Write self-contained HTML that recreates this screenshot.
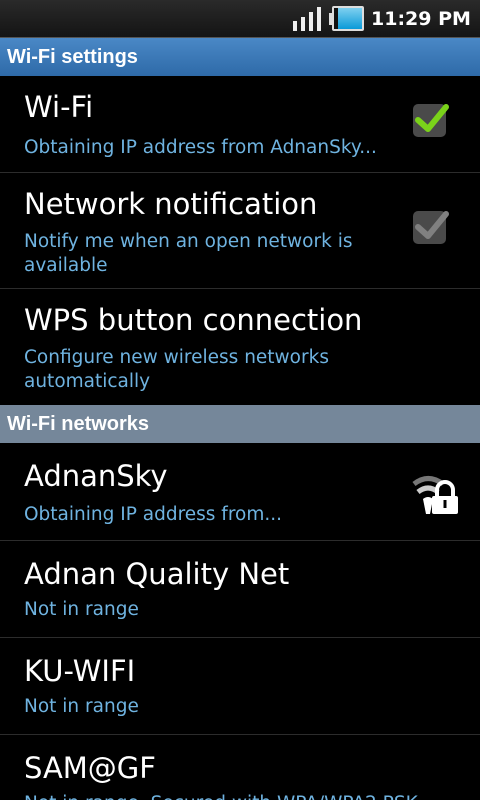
<!DOCTYPE html>
<html><head><meta charset="utf-8"><style>
*{margin:0;padding:0;box-sizing:border-box}
html,body{width:480px;height:800px;overflow:hidden}
body{background:#000;font-family:"DejaVu Sans",sans-serif;color:#fff;position:relative}
.sb{position:absolute;top:0;left:0;width:480px;height:38px;background:linear-gradient(#2a2a2a,#141414);border-bottom:1px solid #555}
.hdr{position:absolute;left:0;width:480px;height:38px;font-weight:bold;font-size:20px;line-height:38px;padding-left:7px;font-family:"Liberation Sans",sans-serif}
.item{position:absolute;left:0;width:480px;border-bottom:1px solid #2c2c2c}
.t{position:absolute;left:24px;font-size:29px;white-space:nowrap}
.s{position:absolute;left:24px;font-size:18.5px;color:#6fb3e0;line-height:24px;white-space:nowrap}
.cb{position:absolute;left:413px;width:33px;height:33px;border-radius:5px;background:#4a4a4a}
</style></head><body>
<div class="sb">
 <svg style="position:absolute;left:292px;top:6px" width="30" height="26"><rect x="1" y="15" width="4" height="10" fill="#eee"/><rect x="9" y="11" width="4" height="14" fill="#eee"/><rect x="17" y="6" width="4" height="19" fill="#eee"/><rect x="25" y="1" width="4" height="24" fill="#eee"/></svg>
 <div style="position:absolute;left:329px;top:13px;width:4px;height:12px;background:#ddd"></div>
 <div style="position:absolute;left:332px;top:6px;width:32px;height:25px;border:2px solid #ddd;border-radius:2px;background:linear-gradient(90deg,#111 0,#111 4px,transparent 4px),linear-gradient(#7fd0f0,#0a9ad8)"></div>
 <div style="position:absolute;left:371px;top:5px;font-size:19px;font-weight:bold;line-height:28px">11:29 PM</div>
</div>
<div class="hdr" style="top:38px;background:linear-gradient(#4a88c6,#2e6aa8)">Wi-Fi settings</div>
<div class="item" style="top:76px;height:97px">
 <div class="t" style="top:14px">Wi-Fi</div>
 <div class="s" style="top:60px">Obtaining IP address from AdnanSky...</div>
 <div class="cb" style="top:28px"></div>
 <svg style="position:absolute;left:414px;top:24px" width="36" height="36"><path d="M4 20 L14 29 L32 7" stroke="#7ad21a" stroke-width="6" fill="none" stroke-linecap="round" stroke-linejoin="round"/></svg>
</div>
<div class="item" style="top:173px;height:116px">
 <div class="t" style="top:14px">Network notification</div>
 <div class="s" style="top:57px">Notify me when an open network is<br>available</div>
 <div class="cb" style="top:38px"></div>
 <svg style="position:absolute;left:414px;top:34px" width="36" height="36"><path d="M4 20 L14 29 L32 7" stroke="#808080" stroke-width="6" fill="none" stroke-linecap="round" stroke-linejoin="round"/></svg>
</div>
<div class="item" style="top:289px;height:116px;border-bottom:none">
 <div class="t" style="top:14px">WPS button connection</div>
 <div class="s" style="top:57px">Configure new wireless networks<br>automatically</div>
</div>
<div class="hdr" style="top:405px;background:#75879a">Wi-Fi networks</div>
<div class="item" style="top:443px;height:98px">
 <div class="t" style="top:16px">AdnanSky</div>
 <div class="s" style="top:60px">Obtaining IP address from...</div>
 <svg style="position:absolute;left:410px;top:26px" width="50" height="46"><path d="M4 15 Q18 4 33 15" stroke="#777" stroke-width="5" fill="none"/><path d="M8 23 Q18 15 28 23" stroke="#ccc" stroke-width="5" fill="none"/><path d="M13 30 Q18 26 23 30 L20 45 L16 45 Z" fill="#fff"/><rect x="22" y="27" width="26" height="18" rx="2" fill="#fff"/><path d="M27 27 V21 a8 8 0 0 1 16 0 V27" stroke="#fff" stroke-width="4" fill="none"/><rect x="33.5" y="31" width="3" height="8" fill="#000"/></svg>
</div>
<div class="item" style="top:541px;height:97px">
 <div class="t" style="top:16px">Adnan Quality Net</div>
 <div class="s" style="top:57px">Not in range</div>
</div>
<div class="item" style="top:638px;height:97px">
 <div class="t" style="top:16px">KU-WIFI</div>
 <div class="s" style="top:57px">Not in range</div>
</div>
<div class="item" style="top:735px;height:65px;border-bottom:none;overflow:hidden">
 <div class="t" style="top:16px">SAM@GF</div>
 <div class="s" style="top:57px">Not in range, Secured with WPA/WPA2 PSK</div>
</div>
</body></html>
